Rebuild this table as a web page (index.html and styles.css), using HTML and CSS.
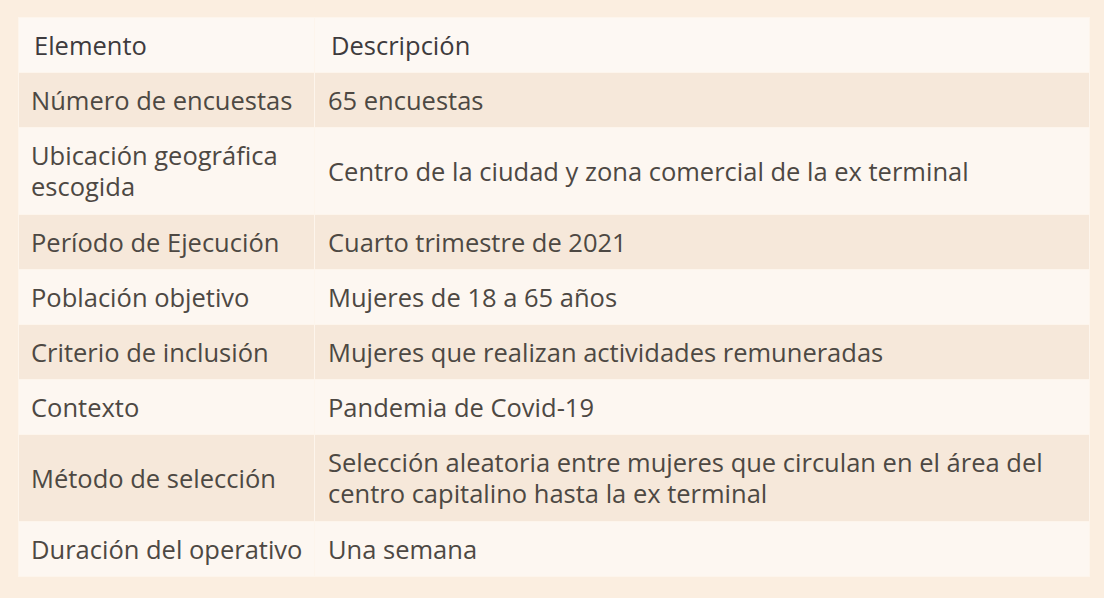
FILE: index.html
```html
<!DOCTYPE html>
<html lang="es">
<head>
<meta charset="utf-8">
<link rel="stylesheet" href="styles.css">
</head>
<body>
<div class="frame">
  <table class="data">
    <thead>
      <tr><th class="c1">Elemento</th><th class="c2">Descripción</th></tr>
    </thead>
    <tbody>
      <tr class="odd"><td class="c1">Número de encuestas</td><td>65 encuestas</td></tr>
      <tr class="even tall"><td class="c1">Ubicación geográfica escogida</td><td>Centro de la ciudad y zona comercial de la ex terminal</td></tr>
      <tr class="odd"><td class="c1">Período de Ejecución</td><td>Cuarto trimestre de 2021</td></tr>
      <tr class="even"><td class="c1">Población objetivo</td><td>Mujeres de 18 a 65 años</td></tr>
      <tr class="odd"><td class="c1">Criterio de inclusión</td><td>Mujeres que realizan actividades remuneradas</td></tr>
      <tr class="even"><td class="c1">Contexto</td><td>Pandemia de Covid-19</td></tr>
      <tr class="odd tall"><td class="c1">Método de selección</td><td>Selección aleatoria entre mujeres que circulan en el área del centro capitalino hasta la ex terminal</td></tr>
      <tr class="even"><td class="c1">Duración del operativo</td><td>Una semana</td></tr>
    </tbody>
  </table>
</div>
</body>
</html>
```
FILE: styles.css
```css
html, body {
  margin: 0;
  padding: 0;
  background: #fbeee0;
}
.frame {
  width: 1104px;
  height: 598px;
  box-sizing: border-box;
  padding: 17px 14px 23px 18px;
  background: #fbeee0;
}
.data {
  width: 1072px;
  table-layout: fixed;
  border-collapse: collapse;
  font-family: "Open Sans", "Noto Sans", sans-serif;
  font-size: 25.5px;
  color: #4d4843;
}
.data th, .data td {
  text-align: left;
  font-weight: normal;
  vertical-align: middle;
  border: 1.5px solid #fdf5ec;
  line-height: 31px;
  padding: 0 10px 0 12px;
}
.data th {
  height: 54px;
  background: #fdf8f3;
  color: #3e3b3d;
  padding-left: 15px;
}
.data th.c1 {
  box-sizing: border-box;
  width: 296px;
}
.data th.c2 {
  padding-left: 16px;
}
.data td {
  height: 54px;
}
.data td + td {
  padding-left: 13px;
}
.data tr.tall td {
  height: 86px;
}
.data tr.odd td {
  background: #f6e8da;
}
.data tr.even td {
  background: #fdf7f1;
}
```
